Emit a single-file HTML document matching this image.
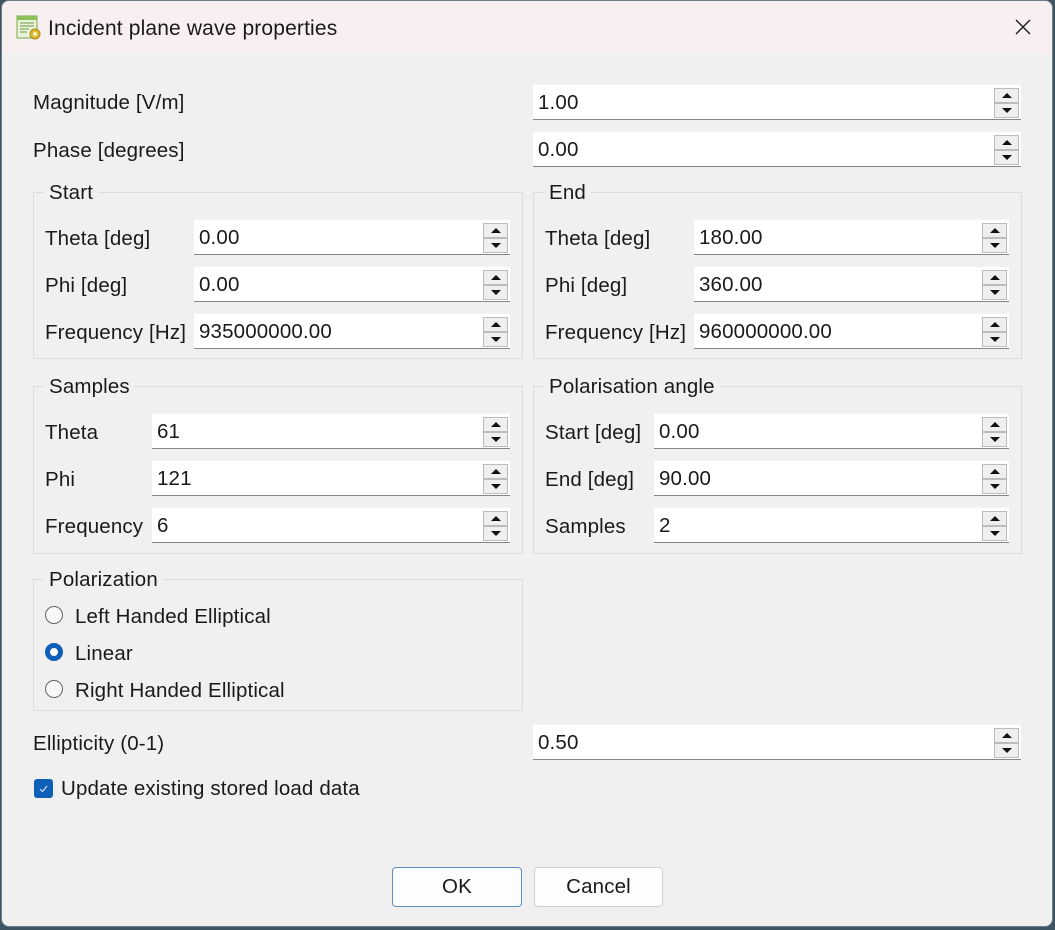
<!DOCTYPE html>
<html><head><meta charset="utf-8"><style>
*{box-sizing:border-box;margin:0;padding:0}
body{width:1055px;height:930px;background:#3e5564;position:relative;overflow:hidden;font-family:"Liberation Sans",sans-serif;font-size:20.5px;letter-spacing:0.15px;color:#1a1a1a}
.win{position:absolute;left:1px;top:0px;width:1052px;height:927px;background:#f0f0f0;border-radius:8px;overflow:hidden;border:1px solid #6d7f8a}
.title{position:absolute;left:0;top:0;width:100%;height:52px;background:#f8eff0}
.t{position:absolute;white-space:nowrap;line-height:22px}
.f{position:absolute;height:36px;background:#fff;border-bottom:1px solid #868686;border-top:1px solid #f4f4f4}
.f span{position:absolute;left:5px;top:7px;line-height:22px}
.sp{position:absolute;right:2px;top:3px;width:25px;height:30px}
.sp div{height:15px;border:1px solid #bcbcbc;background:#efefef;position:relative}
.sp div:after{content:"";position:absolute;left:7px;top:4px;border-left:5px solid transparent;border-right:5px solid transparent}
.up:after{border-bottom:5px solid #111}
.dn:after{border-top:5px solid #111}
.g{position:absolute;border:1px solid #dcdcdc}
.gl{position:absolute;background:#f0f0f0;padding:0 5px;line-height:22px}
.r{position:absolute;width:18px;height:18px;border-radius:50%;border:1px solid #666;background:#f7f7f7}
.btn{position:absolute;height:40px;background:#fdfdfd;border:1px solid #d0d0d0;border-radius:4px;text-align:center;line-height:38px}
</style></head><body><div class="win">
<div class="title"></div>
<svg style="position:absolute;left:13px;top:13px" width="28" height="28" viewBox="0 0 28 28"><rect x="2" y="2" width="20" height="22" fill="#e8f3d8" stroke="#7aa84a"/><rect x="2" y="2" width="20" height="4" fill="#8cc05a"/><g stroke="#6a9a4a"><line x1="5" y1="9" x2="19" y2="9"/><line x1="5" y1="12" x2="19" y2="12"/><line x1="5" y1="15" x2="14" y2="15"/><line x1="5" y1="18" x2="12" y2="18"/></g><circle cx="20" cy="20" r="5" fill="#e0b830" stroke="#a88a20"/><circle cx="20" cy="20" r="2" fill="#fff5c0"/></svg>
<div class="t" style="left:46px;top:17px;font-size:21px">Incident plane wave properties</div>
<svg style="position:absolute;left:1013px;top:18px" width="16" height="16"><path d="M1 1L15 15M15 1L1 15" stroke="#222" stroke-width="1.5"/></svg>

<div class="t" style="left:31px;top:91px">Magnitude [V/m]</div>
<div class="f" style="left:531px;top:83px;width:488px"><span>1.00</span><div class="sp"><div class="up"></div><div class="dn"></div></div></div>
<div class="t" style="left:31px;top:139px">Phase [degrees]</div>
<div class="f" style="left:531px;top:130px;width:488px"><span>0.00</span><div class="sp"><div class="up"></div><div class="dn"></div></div></div>

<div class="g" style="left:31px;top:191px;width:490px;height:167px"></div><div class="gl" style="left:42px;top:181px">Start</div>
<div class="g" style="left:531px;top:191px;width:489px;height:167px"></div><div class="gl" style="left:542px;top:181px">End</div>
<div class="t" style="left:43px;top:227px">Theta [deg]</div>
<div class="f" style="left:192px;top:218px;width:316px"><span>0.00</span><div class="sp"><div class="up"></div><div class="dn"></div></div></div>
<div class="t" style="left:43px;top:274px">Phi [deg]</div>
<div class="f" style="left:192px;top:265px;width:316px"><span>0.00</span><div class="sp"><div class="up"></div><div class="dn"></div></div></div>
<div class="t" style="left:43px;top:321px">Frequency [Hz]</div>
<div class="f" style="left:192px;top:312px;width:316px"><span>935000000.00</span><div class="sp"><div class="up"></div><div class="dn"></div></div></div>
<div class="t" style="left:543px;top:227px">Theta [deg]</div>
<div class="f" style="left:692px;top:218px;width:315px"><span>180.00</span><div class="sp"><div class="up"></div><div class="dn"></div></div></div>
<div class="t" style="left:543px;top:274px">Phi [deg]</div>
<div class="f" style="left:692px;top:265px;width:315px"><span>360.00</span><div class="sp"><div class="up"></div><div class="dn"></div></div></div>
<div class="t" style="left:543px;top:321px">Frequency [Hz]</div>
<div class="f" style="left:692px;top:312px;width:315px"><span>960000000.00</span><div class="sp"><div class="up"></div><div class="dn"></div></div></div>

<div class="g" style="left:31px;top:385px;width:490px;height:168px"></div><div class="gl" style="left:42px;top:375px">Samples</div>
<div class="g" style="left:531px;top:385px;width:489px;height:168px"></div><div class="gl" style="left:542px;top:375px">Polarisation angle</div>
<div class="t" style="left:43px;top:421px">Theta</div>
<div class="f" style="left:150px;top:412px;width:358px"><span>61</span><div class="sp"><div class="up"></div><div class="dn"></div></div></div>
<div class="t" style="left:43px;top:468px">Phi</div>
<div class="f" style="left:150px;top:459px;width:358px"><span>121</span><div class="sp"><div class="up"></div><div class="dn"></div></div></div>
<div class="t" style="left:43px;top:515px">Frequency</div>
<div class="f" style="left:150px;top:506px;width:358px"><span>6</span><div class="sp"><div class="up"></div><div class="dn"></div></div></div>
<div class="t" style="left:543px;top:421px">Start [deg]</div>
<div class="f" style="left:652px;top:412px;width:355px"><span>0.00</span><div class="sp"><div class="up"></div><div class="dn"></div></div></div>
<div class="t" style="left:543px;top:468px">End [deg]</div>
<div class="f" style="left:652px;top:459px;width:355px"><span>90.00</span><div class="sp"><div class="up"></div><div class="dn"></div></div></div>
<div class="t" style="left:543px;top:515px">Samples</div>
<div class="f" style="left:652px;top:506px;width:355px"><span>2</span><div class="sp"><div class="up"></div><div class="dn"></div></div></div>

<div class="g" style="left:31px;top:578px;width:490px;height:132px"></div><div class="gl" style="left:42px;top:568px">Polarization</div>
<div class="r" style="left:43px;top:605px"></div><div class="t" style="left:73px;top:605px">Left Handed Elliptical</div>
<div class="r" style="left:43px;top:642px;background:#fff;border:5px solid #0f5fb8"></div><div class="t" style="left:73px;top:642px">Linear</div>
<div class="r" style="left:43px;top:679px"></div><div class="t" style="left:73px;top:679px">Right Handed Elliptical</div>

<div class="t" style="left:31px;top:732px">Ellipticity (0-1)</div>
<div class="f" style="left:531px;top:723px;width:488px"><span>0.50</span><div class="sp"><div class="up"></div><div class="dn"></div></div></div>

<div style="position:absolute;left:32px;top:778px;width:19px;height:19px;background:#0f5fb8;border-radius:3px"><svg width="19" height="19"><path d="M6 10l2.5 2.5L13 7" stroke="#cfe0f5" stroke-width="1.2" fill="none"/></svg></div>
<div class="t" style="left:59px;top:777px">Update existing stored load data</div>

<div class="btn" style="left:390px;top:866px;width:130px;border:1px solid #5a8fc8">OK</div>
<div class="btn" style="left:532px;top:866px;width:129px">Cancel</div>
</div></body></html>
